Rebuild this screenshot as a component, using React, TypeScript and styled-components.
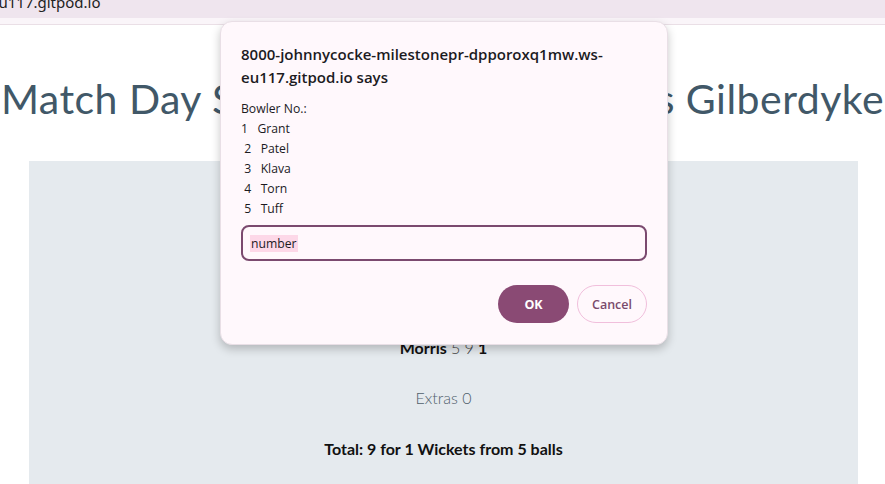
import React from "react";
import styled, { createGlobalStyle } from "styled-components";

const Global = createGlobalStyle`
  html, body { margin: 0; padding: 0; background: #ffffff; overflow: hidden; }
  body { font-family: "Lato", "Open Sans", sans-serif; width: 885px; height: 484px; }
`;

const Page = styled.div`
  position: relative;
  width: 885px;
  height: 484px;
  overflow: hidden;
  display: flex;
  flex-direction: column;
`;

const AddressBar = styled.div`
  height: 18px;
  background: #efe5ee;
  overflow: hidden;
  display: flex;
  align-items: flex-end;
`;

const AddressText = styled.span`
  font-family: "Noto Sans", "Open Sans", sans-serif;
  font-size: 15px;
  color: #222;
  margin-left: -10px;
  line-height: 1;
  margin-bottom: 8px;
`;

const TabStrip = styled.div`
  height: 6px;
  background: #faf5f9;
  border-bottom: 1px solid #eadfe6;
`;

const Title = styled.h1`
  margin: 50px 0 0 0;
  font-family: "Lato", sans-serif;
  font-weight: 400;
  font-size: 41px;
  line-height: 48px;
  color: #415868;
  text-align: center;
  white-space: nowrap;
  letter-spacing: 0.48px;
`;

const Panel = styled.section`
  margin: 38px 27px 0 29px;
  flex: 1;
  background: #e5eaee;
  display: flex;
  flex-direction: column;
  align-items: center;
  padding-top: 177px;
`;

const Row = styled.p<{ $gap: number }>`
  margin: 0 0 ${(p) => p.$gap}px 0;
  font-size: 16px;
  line-height: 20px;
  color: #111;
`;

const Strong = styled.span`
  font-weight: 700;
  color: #111;
`;

const Light = styled.span`
  font-weight: 300;
  color: #444;
`;

const Extras = styled.p`
  margin: 0 0 31px 0;
  font-size: 16px;
  line-height: 20px;
  font-weight: 300;
  color: #50606c;
`;

const Dialog = styled.div`
  position: absolute;
  left: 220px;
  top: 21px;
  width: 448px;
  height: 324px;
  box-sizing: border-box;
  background: #fff8fc;
  border-radius: 12px;
  border: 1px solid #e9dfe6;
  box-shadow: 0 4px 10px rgba(0, 0, 0, 0.22);
  padding: 21px 20px 20px 20px;
  display: flex;
  flex-direction: column;
  font-family: "Open Sans", "Noto Sans", sans-serif;
`;

const DialogTitle = styled.div`
  font-size: 15px;
  font-weight: 600;
  line-height: 23px;
  color: #1c1b1f;
  width: 400px;
`;

const Message = styled.div`
  margin-top: 10px;
  font-size: 12.2px;
  line-height: 20px;
  color: #1c1b1f;
  white-space: pre;
`;

const Input = styled.div`
  margin-top: 6px;
  height: 36px;
  box-sizing: border-box;
  border: 2px solid #7b4a6f;
  border-radius: 8px;
  display: flex;
  align-items: center;
  padding-left: 7px;
`;

const Selected = styled.span`
  background: #fdd8e8;
  font-size: 12.2px;
  line-height: 17px;
  color: #1c1b1f;
  padding: 0 1px;
`;

const Buttons = styled.div`
  margin-top: 24px;
  display: flex;
  justify-content: flex-end;
  gap: 8px;
`;

const Button = styled.button<{ $primary?: boolean }>`
  height: 38px;
  width: ${(p) => (p.$primary ? 71 : 70)}px;
  border-radius: 19px;
  font-family: "Open Sans", "Noto Sans", sans-serif;
  font-size: 12.5px;
  font-weight: ${(p) => (p.$primary ? 700 : 600)};
  color: ${(p) => (p.$primary ? "#ffffff" : "#7a4a6c")};
  background: ${(p) => (p.$primary ? "#8a4a74" : "transparent")};
  border: ${(p) => (p.$primary ? "none" : "1px solid #f1bfdc")};
  padding: 0;
`;

export default function App() {
  return (
    <Page>
      <Global />
      <AddressBar>
        <AddressText>eu117.gitpod.io</AddressText>
      </AddressBar>
      <TabStrip />
      <Title>Match Day Scoresheet: Hessle CC vs Gilberdyke</Title>
      <Panel>
        <Row $gap={30}>
          <Strong>Morris</Strong> <Light>5 9</Light> <Strong>1</Strong>
        </Row>
        <Extras>Extras 0</Extras>
        <Row $gap={0}>
          <Strong>Total: 9 for 1 Wickets from 5 balls</Strong>
        </Row>
      </Panel>
      <Dialog role="dialog">
        <DialogTitle>8000-johnnycocke-milestonepr-dpporoxq1mw.ws-eu117.gitpod.io says</DialogTitle>
        <Message>{"Bowler No.:\n1   Grant\n 2   Patel\n 3   Klava\n 4   Torn\n 5   Tuff"}</Message>
        <Input>
          <Selected>number</Selected>
        </Input>
        <Buttons>
          <Button $primary>OK</Button>
          <Button>Cancel</Button>
        </Buttons>
      </Dialog>
    </Page>
  );
}
